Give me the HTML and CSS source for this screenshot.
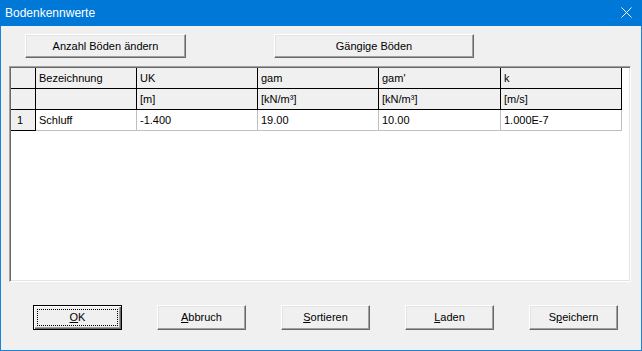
FILE: index.html
```html
<!DOCTYPE html>
<html lang="de">
<head>
<meta charset="utf-8">
<title>Bodenkennwerte</title>
<link rel="stylesheet" href="styles.css">
</head>
<body>
<div class="window">
  <div class="titlebar">
    <span class="title">Bodenkennwerte</span>
    <svg class="close" width="11" height="11" viewBox="0 0 11 11"><path d="M0.5 0.5L10.5 10.5M10.5 0.5L0.5 10.5" stroke="#fff" stroke-width="1" fill="none"/></svg>
  </div>
  <div class="client">
    <div class="top-buttons">
      <div class="btn btn-anzahl">Anzahl Böden ändern</div>
      <div class="btn btn-gaengig">Gängige Böden</div>
    </div>
    <div class="grid-frame">
      <div class="grid">
        <div class="cell fixed"></div>
        <div class="cell fixed">Bezeichnung</div>
        <div class="cell fixed">UK</div>
        <div class="cell fixed">gam</div>
        <div class="cell fixed">gam'</div>
        <div class="cell fixed">k</div>

        <div class="cell fixed"></div>
        <div class="cell fixed"></div>
        <div class="cell fixed">[m]</div>
        <div class="cell fixed">[kN/m³]</div>
        <div class="cell fixed">[kN/m³]</div>
        <div class="cell fixed">[m/s]</div>

        <div class="cell fixed rowhead">1</div>
        <div class="cell">Schluff</div>
        <div class="cell">-1.400</div>
        <div class="cell">19.00</div>
        <div class="cell">10.00</div>
        <div class="cell">1.000E-7</div>
      </div>
    </div>
    <div class="bottom-buttons">
      <div class="btn btn-small btn-default"><span><u>O</u>K</span></div>
      <div class="btn btn-small"><span><u>A</u>bbruch</span></div>
      <div class="btn btn-small"><span><u>S</u>ortieren</span></div>
      <div class="btn btn-small"><span><u>L</u>aden</span></div>
      <div class="btn btn-small"><span>S<u>p</u>eichern</span></div>
    </div>
  </div>
</div>
</body>
</html>
```

FILE: styles.css
```css
html, body {
  margin: 0;
  padding: 0;
  background: #f0f0f0;
}

body {
  font-family: "Liberation Sans", Arial, sans-serif;
  font-size: 11px;
  color: #000;
}

.window {
  width: 642px;
  height: 351px;
  box-sizing: border-box;
  border: 1px solid #1883d7;
  border-top: 0;
  background: #f0f0f0;
  display: flex;
  flex-direction: column;
}

.titlebar {
  height: 26px;
  flex: 0 0 26px;
  background: #0078d7;
  margin: 0 -1px;
  display: flex;
  align-items: center;
  justify-content: space-between;
  padding: 0 10px 0 5px;
  color: #fff;
}

.title {
  font-size: 12px;
  line-height: 26px;
}

.close {
  display: block;
  margin-top: -1px;
}

.client {
  padding-top: 8px;
}

.top-buttons {
  display: flex;
  gap: 88px;
  padding-left: 24px;
  height: 24px;
}

.btn {
  position: relative;
  box-sizing: border-box;
  height: 24px;
  background: #f0f0f0;
  border-style: solid;
  border-width: 1px;
  border-color: #fff #696969 #696969 #fff;
  box-shadow: inset -1px -1px 0 #a0a0a0, inset 1px 1px 0 #e3e3e3;
  display: flex;
  align-items: center;
  justify-content: center;
  line-height: 13px;
  white-space: nowrap;
}

.btn-anzahl {
  width: 161px;
}

.btn-gaengig {
  width: 200px;
}

.grid-frame {
  margin: 8px 0 0 8px;
  width: 622px;
  height: 216px;
  box-sizing: border-box;
  border: 1px solid;
  border-color: #a0a0a0 #fff #fff #a0a0a0;
  padding: 1px;
  background: #fff;
  box-shadow: inset 1px 1px 0 #696969, inset -1px -1px 0 #e3e3e3;
}

.grid {
  display: grid;
  grid-template-columns: 25px 101px 121px 121px 122px 121px;
  grid-auto-rows: 21px;
  width: max-content;
}

.cell {
  box-sizing: border-box;
  border-right: 1px solid #c0c0c0;
  border-bottom: 1px solid #c0c0c0;
  padding-left: 3px;
  line-height: 20px;
  white-space: nowrap;
  overflow: hidden;
  background: #fff;
}

.cell.fixed {
  background: #f0f0f0;
  border-right-color: #000;
  border-bottom-color: #000;
}

.cell.rowhead {
  padding-left: 6px;
}

.bottom-buttons {
  display: flex;
  gap: 35px;
  padding-left: 32px;
  margin-top: 23px;
}

.btn-small {
  width: 89px;
  height: 25px;
}

.btn-default {
  border: 1px solid #000;
  box-shadow: inset 1px 1px 0 #fff, inset -1px -1px 0 #696969, inset -2px -2px 0 #a0a0a0;
}

.btn-default::after {
  content: "";
  position: absolute;
  left: 3px;
  top: 3px;
  right: 3px;
  bottom: 3px;
  border: 1px dotted #000;
}

u {
  text-decoration: underline;
  text-underline-offset: 1px;
}
```
